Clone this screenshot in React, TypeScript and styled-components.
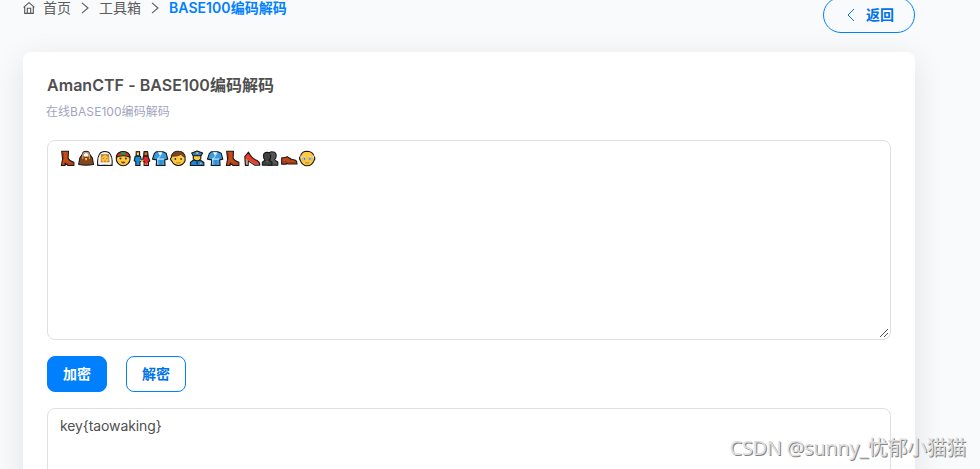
import React from "react";
import styled, { createGlobalStyle } from "styled-components";

const GlobalStyle = createGlobalStyle`
  * { box-sizing: border-box; }
  html, body { margin: 0; height: 469px; overflow: hidden; background: #f9fafc; }
  body { font-family: Inter, "Noto Sans CJK SC", sans-serif; color: #4f4f4f; }
`;

const Page = styled.div`
  position: relative;
  width: 980px;
  height: 469px;
  overflow: hidden;
  padding: 0 65px 0 23px;
`;

const TopBar = styled.header`
  display: flex;
  justify-content: space-between;
  align-items: flex-start;
  height: 52px;
`;

const Breadcrumb = styled.nav`
  display: flex;
  align-items: center;
  height: 20px;
  margin-top: -2px;
  font-size: 14px;
  line-height: 20px;
  white-space: nowrap;
`;

const Crumb = styled.span<{ $active?: boolean }>`
  color: ${(p) => (p.$active ? "#0080ff" : "#5c5c5c")};
  font-weight: ${(p) => (p.$active ? 600 : 400)};
  letter-spacing: ${(p) => (p.$active ? "0.06px" : "0")};
`;

const HomeIcon = styled.svg`
  width: 12px;
  height: 12px;
  margin-right: 8px;
`;

const Separator = styled.svg`
  width: 8px;
  height: 12px;
  margin: 0 10px;
`;

const BackButton = styled.button`
  display: flex;
  align-items: center;
  justify-content: center;
  gap: 11px;
  width: 92px;
  height: 36px;
  margin-top: -3px;
  padding: 0 0 0 3px;
  border: 1px solid #0080ff;
  border-radius: 18px;
  background: transparent;
  color: #0073e6;
  font: 700 14px/20px Inter, "Noto Sans CJK SC", sans-serif;
`;

const Card = styled.main`
  height: 500px;
  padding: 23px 24px 24px;
  border-radius: 8px;
  background: #fff;
  box-shadow: 0 8px 32px rgba(0, 0, 0, 0.1);
`;

const Title = styled.h1`
  margin: 0;
  height: 20px;
  font-size: 16px;
  line-height: 20px;
  font-weight: 600;
  letter-spacing: 0.04px;
  white-space: nowrap;
`;

const Subtitle = styled.p`
  margin: 8px 0 0 -1px;
  height: 18px;
  font-size: 12px;
  line-height: 18px;
  color: #a1a5c0;
  letter-spacing: 0.06px;
`;

const Field = styled.div<{ $height: number; $top: number }>`
  position: relative;
  height: ${(p) => p.$height}px;
  margin-top: ${(p) => p.$top}px;
  padding: 6px 12px;
  border: 1px solid #dfdfdf;
  border-radius: 8px;
  background: #fff;
  font-size: 14px;
  line-height: 21px;
  letter-spacing: -0.1px;
`;

const EmojiLine = styled.div`
  display: flex;
  align-items: center;
  height: 23px;
  margin-left: -1px;
`;

const Emoji = styled.svg`
  flex: none;
  width: 18.38px;
  height: 18px;
  overflow: visible;
`;

const Grip = styled.svg`
  position: absolute;
  right: 0;
  bottom: 0;
  width: 11px;
  height: 11px;
`;

const Actions = styled.div`
  display: flex;
  gap: 19px;
  margin-top: 16px;
`;

const ActionButton = styled.button<{ $primary?: boolean }>`
  width: 60px;
  height: 36px;
  padding: 0 0 1px;
  border: 1px solid #0080ff;
  border-radius: 8px;
  background: ${(p) => (p.$primary ? "#0080ff" : "#fff")};
  color: ${(p) => (p.$primary ? "#fff" : "#0073e6")};
  font: 700 14px/20px Inter, "Noto Sans CJK SC", sans-serif;
`;

const Watermark = styled.div`
  position: absolute;
  right: 14px;
  top: 434px;
  font: 400 20px/28px "Noto Sans", "Noto Sans CJK SC", sans-serif;
  letter-spacing: -0.35px;
  color: #dedede;
  text-shadow: 1px 1px 0 #858585;
  white-space: nowrap;
`;

const ink = { stroke: "#171717", strokeWidth: 1.1, strokeLinejoin: "round" as const };

const Boot = () => (
  <g {...ink}>
    <path d="M2.5 1.2h6.8L8.9 8q.7 2.6 5.8 4.3v3.2H8.9l-3-2.4v2.4H2.2L3.4 9z" fill="#c84a16" />
    <path d="M4.3 3v6.5M6 12l3.2 2h4.6" fill="none" stroke="#8b3515" strokeWidth=".8" />
  </g>
);

const Bag = () => (
  <g {...ink}>
    <path d="M1.5 14.5 2.6 8 5.3 4Q5.8 1.2 8.9 1.2T12.4 4l2.8 4 1.1 6.5q-7.4 1.6-14.8 0Z" fill="#83461f" />
    <path d="M6.5 6.5V4.7Q6.7 3 8.9 3t2.4 1.7v1.8Z" fill="#fff" stroke="none" />
    <path d="M5.6 9V4.8Q6 2.2 8.9 2.2t3.3 2.6V9" fill="none" stroke="#cfa57e" strokeWidth="1.1" />
    <rect x="8" y="8" width="1.8" height="2.2" fill="#ffc52e" stroke="none" />
  </g>
);

const Bride = () => (
  <g {...ink}>
    <path d="M1.5 15.4Q.8 6.2 4.5 2.7q4.2-2.5 8.4 0 3.8 3.5 3 12.7z" fill="#eee" />
    <path d="M4.8 4.3h8l.5 8H4.5z" fill="#bd7c38" stroke="none" />
    <path d="M5.3 7 8.8 5l3.4 2v3.7L8.8 13l-3.5-2.3z" fill="#ffc13b" stroke="none" />
    <path d="M6.5 8.5h1m2.6 0h1M8 11.2h1.6" stroke="#82501f" strokeWidth=".8" />
    <path d="M3.5 14.3q5.3-2 10.4 0M3.2 13V7M14.3 13V7" stroke="#fff" strokeWidth="1.2" fill="none" />
  </g>
);

const CapMan = () => (
  <g {...ink}>
    <circle cx="9" cy="8.8" r="6.9" fill="#ffc83d" />
    <path d="M2.1 7.2Q2.5 1.9 9 1.5q6.6.4 6.9 5.7Q9 4.2 2.1 7.2Z" fill="#df2635" />
    <path d="M7 2h4l.6 3.2q-2.8-.5-5.2 0z" fill="#199944" stroke="none" />
    <circle cx="6.3" cy="8.6" r="1" fill="#333" stroke="none" />
    <circle cx="11.7" cy="8.6" r="1" fill="#333" stroke="none" />
    <path d="M6.6 11.5q2.4.5 4.8 0-.7 2-2.4 2t-2.4-2Z" fill="#6b3518" stroke="none" />
  </g>
);

const Couple = () => (
  <g {...ink}>
    <path d="M2 6.2h5.2l1.2 4.7-1.6.8v3.8H2.6v-4L1 10.8z" fill="#168ce0" />
    <path d="M10.3 6.2h4.5l1.8 4.8-1.3.7v3.8h-4.4v-4l-1.6-.8z" fill="#e32430" />
    <path d="M3 1.5h3.4v4.3H3z" fill="#ffc83d" />
    <path d="M10.8 1.5h3.6l.6 4.3h-4.5z" fill="#a94e23" />
    <path d="M3 1.8h3.4" fill="none" stroke="#51351e" strokeWidth="1.2" />
    <path d="M7.2 10 8.8 11.5l1.3-1.5" stroke="#ffc83d" strokeWidth="1.2" fill="none" />
    <path d="M11.8 4h1.8M12 13.3v1.5M14.2 13.3v1.5" stroke="#e7a342" />
  </g>
);

const Robe = () => (
  <g {...ink}>
    <path d="M5.2 1.7h6.5L15 3.3l1.6 5.8-3.1.8.4 5.6H5l.5-5.6-4.2-.8 1.8-5.4z" fill="#3a9be0" />
    <path d="M6.8 2.3 9 6l2-3.7z" stroke="none" fill="#fff" />
    <path d="M11 2.7 8.5 6.8l-2 2v5.8" stroke="#9bd7fa" fill="none" />
    <path d="M6 9.1h7" stroke="#d9f2ff" strokeWidth="1" />
    <path d="M9.8 10v4.8" stroke="#2379b6" strokeWidth=".7" />
  </g>
);

const Boy = () => (
  <g {...ink}>
    <path d="M2.3 5.8Q4.5 1 9.2 1.4q6.2.3 6.7 6.2v3.2q-2 4.7-6.7 4.7t-6.8-4.7Q.3 9 2.1 7.6z" fill="#ffc83d" />
    <path d="M2.4 6.2Q3 1.5 9.2 1.4q6.2.4 6.6 5.8-2.8-.8-3.8-2.9-3.3 2.3-9.6 1.9Z" fill="#7d4622" stroke="#4d301e" strokeWidth=".8" />
    <circle cx="6.2" cy="9" r=".9" fill="#333" stroke="none" />
    <circle cx="11.9" cy="9" r=".9" fill="#333" stroke="none" />
    <path d="M7.2 12.5q2 .7 4 0" stroke="#ca7f21" fill="none" />
  </g>
);

const Officer = () => (
  <g {...ink}>
    <path d="M2.2 15.5v-3L5 10.2h7.3l3.4 2.3v3z" fill="#1e83d4" />
    <path d="M5.1 4.5h7.5v4.3q-3.6 4.2-7.5 0Z" fill="#ffc83d" />
    <path d="M3.5 3 9 1l5.5 2-1.7 2.7H5z" fill="#2d7fc5" />
    <path d="M8 3h2" stroke="#ffd44c" strokeWidth="1.4" />
    <path d="m8.9 11-1 2 1 2 1-2z" fill="#123c6a" stroke="none" />
    <path d="M11.6 13.3h1.7" stroke="#ffd44c" />
  </g>
);

const Heel = () => (
  <g {...ink}>
    <path d="M1.6 6.5 5.3 2.2Q8.3 8.2 13.4 10.3q3.2 1.5 3.2 4.8h-5.2L5 10.8v4.6H2.2z" fill="#f03a25" />
    <path d="m2.6 8 2 2.2v4.5H2.9z" fill="#b1a08f" stroke="none" />
    <path d="m5 10.1 6.7 4.1h4" stroke="#b18170" fill="none" strokeWidth=".8" />
  </g>
);

const Busts = () => (
  <g {...ink}>
    <path d="M6.5 13v-2l2.3-1.6Q7 7.8 7.3 4.2 8 1.7 11 1.8q4 0 4 4 0 2.6-1.8 4.2l3.4 2v3.2H7z" fill="#555" />
    <path d="M1.2 15.2v-3l2.5-2Q2 8.6 2.3 5.3q.3-3 3.6-3.1 3.6.2 3.6 3.7 0 2.6-1.8 4.4l3 2v3z" fill="#414141" />
    <path d="M8.5 4.5 10 3.4m-5 8h2.5M12 11h2" stroke="#777" strokeWidth=".7" />
  </g>
);

const Shoe = () => (
  <g {...ink}>
    <path d="M1.6 7.7q3 .4 5.4-1.1l4.2 2.6 4.2 1.1q1.4 1 1.4 3.7H8.3l-2-.8v.9H1.4z" fill="#c54719" />
    <path d="M2 11.8h4l2.4.9h7.4" fill="none" stroke="#7c3018" strokeWidth=".7" />
    <path d="m8.6 8.5-.9 1.2m3-.2-.9 1.3" stroke="#6d281a" strokeWidth=".8" />
  </g>
);

const Elder = () => (
  <g {...ink}>
    <path d="M2.3 6Q3.5 1.4 9 1.3q5.7.1 6.7 5 1.8 2.3.2 4.1Q14 15.8 9 15.8T2.1 10.4Q.5 8.3 2.3 6Z" fill="#ffc83d" />
    <path d="M2.8 8V5.5M15.2 8V5.5" stroke="#ddd" strokeWidth="1.2" />
    <path d="M5.2 6.2h2m3.5 0h2" stroke="#efe6cb" strokeWidth="1" />
    <path d="M4.2 8h3.5v1.9H4.2zm6.1 0h3.5v1.9h-3.5z" fill="#e0f0f4" stroke="#9da9ad" strokeWidth=".6" />
    <circle cx="6.2" cy="8.9" r=".7" fill="#333" stroke="none" />
    <circle cx="11.8" cy="8.9" r=".7" fill="#333" stroke="none" />
    <path d="M7 12.8q2 .5 4 0" stroke="#976023" fill="none" strokeWidth=".8" />
  </g>
);

const emojis = [Boot, Bag, Bride, CapMan, Couple, Robe, Boy, Officer, Robe, Boot, Heel, Busts, Shoe, Elder];

const Chevron = () => (
  <Separator viewBox="0 0 8 12" fill="none" stroke="#5c5c5c" strokeWidth="1.1">
    <path d="m1 .8 6 5.2-6 5.2" />
  </Separator>
);

export default function App() {
  return (
    <>
      <GlobalStyle />
      <Page>
        <TopBar>
          <Breadcrumb>
            <HomeIcon viewBox="0 0 12 12" fill="none" stroke="#555" strokeWidth="1.1">
              <path d="M.6 5.3 6 .7l5.4 4.6M1.7 4.6v6.8h8.6V4.6M4.3 11.3v-5h3.4v5" />
            </HomeIcon>
            <Crumb>首页</Crumb>
            <Chevron />
            <Crumb>工具箱</Crumb>
            <Chevron />
            <Crumb $active>BASE100编码解码</Crumb>
          </Breadcrumb>
          <BackButton>
            <svg width="8" height="14" viewBox="0 0 8 14" fill="none" stroke="#0073e6">
              <path d="M7 1 1 7l6 6" />
            </svg>
            返回
          </BackButton>
        </TopBar>
        <Card>
          <Title>AmanCTF - BASE100编码解码</Title>
          <Subtitle>在线BASE100编码解码</Subtitle>
          <Field $height={200} $top={19}>
            <EmojiLine>
              {emojis.map((Glyph, i) => (
                <Emoji key={i} viewBox="0 0 18 18"><Glyph /></Emoji>
              ))}
            </EmojiLine>
            <Grip viewBox="0 0 11 11" stroke="#555" strokeWidth="1">
              <path d="M1 9 9 1M5 9l4-4" />
            </Grip>
          </Field>
          <Actions>
            <ActionButton $primary>加密</ActionButton>
            <ActionButton>解密</ActionButton>
          </Actions>
          <Field $height={200} $top={16}>key{"{"}taowaking{"}"}</Field>
        </Card>
        <Watermark>CSDN @sunny_忧郁小猫猫</Watermark>
      </Page>
    </>
  );
}
